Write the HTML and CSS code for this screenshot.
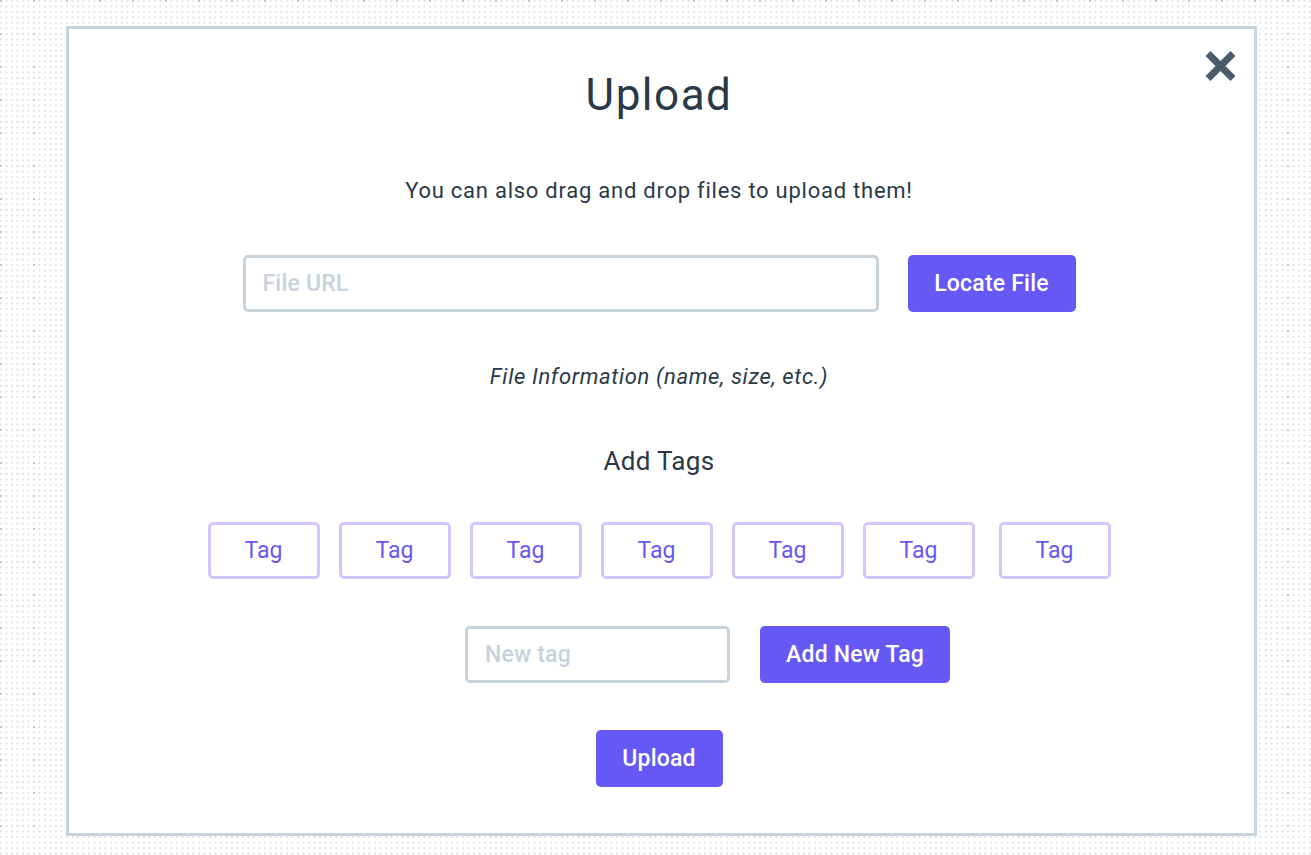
FILE: index.html
```html
<!DOCTYPE html>
<html lang="en">
<head>
<meta charset="utf-8">
<title>Upload</title>
<link rel="stylesheet" href="styles.css">
</head>
<body>
<div class="modal">
  <button class="close" aria-label="Close">
    <svg width="33" height="32" viewBox="0 0 33 32"><path d="M4 3.5 L29 28.5 M29 3.5 L4 28.5" stroke="#4a5b6b" stroke-width="7" stroke-linecap="butt" fill="none"/></svg>
  </button>
  <h1 class="title">Upload</h1>
  <p class="subtitle">You can also drag and drop files to upload them!</p>
  <div class="row url-row">
    <input class="field url-field" type="text" placeholder="File URL">
    <button class="btn locate-btn">Locate File</button>
  </div>
  <p class="info">File Information (name, size, etc.)</p>
  <h2 class="tags-title">Add Tags</h2>
  <div class="tags">
    <span class="tag">Tag</span>
    <span class="tag">Tag</span>
    <span class="tag">Tag</span>
    <span class="tag">Tag</span>
    <span class="tag">Tag</span>
    <span class="tag">Tag</span>
    <span class="tag">Tag</span>
  </div>
  <div class="row new-row">
    <input class="field new-field" type="text" placeholder="New tag">
    <button class="btn add-btn">Add New Tag</button>
  </div>
  <button class="btn upload-btn">Upload</button>
</div>
</body>
</html>
```
FILE: styles.css
```css
html, body {
  margin: 0;
  padding: 0;
}
body {
  width: 1311px;
  height: 855px;
  overflow: hidden;
  background-color: #ffffff;
  background-image:
    radial-gradient(circle at 1px 1px, #bcc7d2 0.9px, transparent 1.2px),
    radial-gradient(circle at 1px 1px, #dae1e8 0.7px, transparent 1px);
  background-size: 33px 33px, 5.5px 5.5px;
  font-family: Roboto, "Liberation Sans", sans-serif;
  color: #2a3947;
}
.modal {
  position: relative;
  box-sizing: border-box;
  width: 1191px;
  height: 810px;
  margin: 26px 0 0 66px;
  background: #ffffff;
  border: 3px solid #c9d3dc;
  display: flex;
  flex-direction: column;
  align-items: center;
  padding: 44px 5px 0 0;
}
.close {
  position: absolute;
  top: 21px;
  right: 17px;
  width: 33px;
  height: 32px;
  padding: 0;
  border: 0;
  background: none;
  cursor: pointer;
}
.close svg { display: block; }
.title {
  margin: 0;
  font-size: 44px;
  line-height: 44px;
  font-weight: 400;
  letter-spacing: 1.5px;
}
.subtitle {
  margin: 60px 0 0;
  font-size: 22px;
  line-height: 28px;
  letter-spacing: 0.75px;
}
.row {
  display: flex;
  gap: 29px;
}
.url-row { margin-top: 50px; }
.field {
  box-sizing: border-box;
  height: 57px;
  border: 3px solid #c9d3dc;
  border-radius: 5px;
  padding: 0 17px;
  font-family: inherit;
  font-size: 23px;
  font-weight: 500;
  letter-spacing: 0.2px;
  color: #2a3947;
  outline: none;
  background: #fff;
}
.field::placeholder { color: #c8d2dc; }
.url-field { width: 636px; }
.btn {
  box-sizing: border-box;
  height: 57px;
  border: 0;
  border-radius: 5px;
  background: #6658f5;
  color: #ffffff;
  font-family: inherit;
  font-size: 23px;
  font-weight: 500;
  letter-spacing: 0.2px;
  padding: 0;
  cursor: pointer;
}
.locate-btn { width: 168px; }
.info {
  margin: 51px 0 0;
  font-size: 22px;
  line-height: 28px;
  font-style: italic;
  letter-spacing: 0.65px;
}
.tags-title {
  margin: 55px 0 0;
  font-size: 26px;
  line-height: 30px;
  font-weight: 400;
  letter-spacing: 0.3px;
}
.tags {
  display: flex;
  gap: 19px;
  margin-top: 46px;
}
.tag {
  box-sizing: border-box;
  width: 112px;
  height: 57px;
  border: 3px solid #cdc8fb;
  border-radius: 5px;
  color: #6658f5;
  font-size: 23px;
  display: flex;
  align-items: center;
  justify-content: center;
}
.tag:last-child { margin-left: 5px; }
.new-row {
  margin-top: 47px;
  margin-left: 97px;
  gap: 30px;
}
.new-field { width: 265px; }
.add-btn { width: 190px; }
.upload-btn {
  margin-top: 47px;
  width: 127px;
}
```
